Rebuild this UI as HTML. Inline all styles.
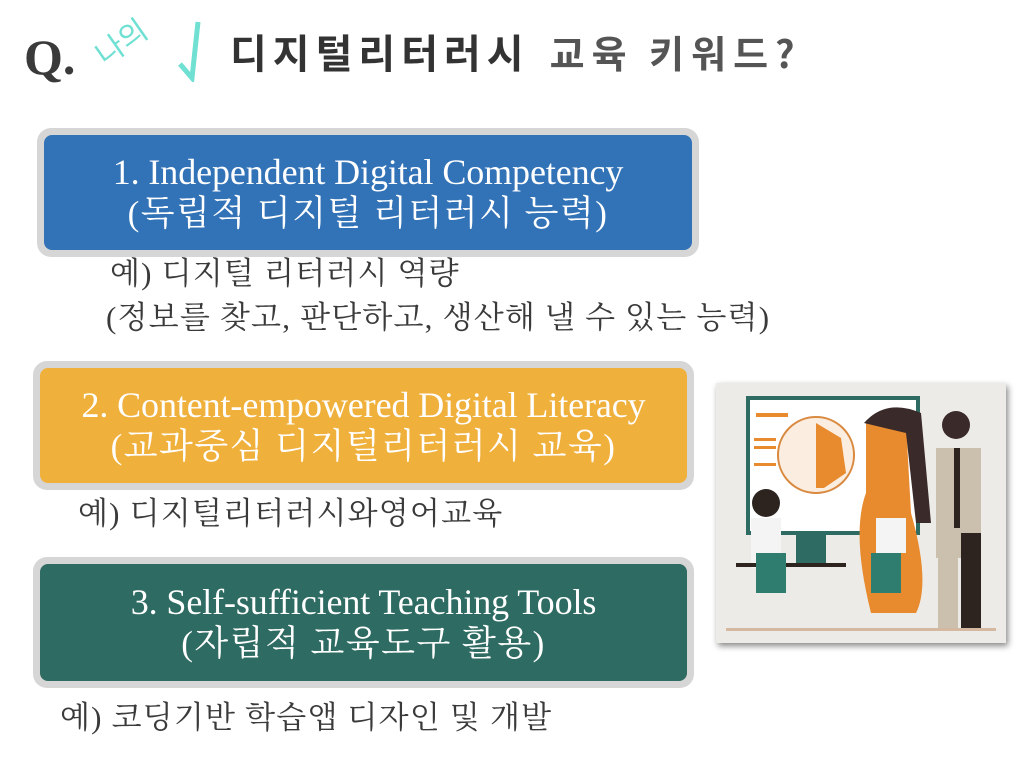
<!DOCTYPE html>
<html><head><meta charset="utf-8"><style>
body{margin:0;width:1024px;height:768px;background:#fff;position:relative;overflow:hidden;font-family:"Liberation Serif","Noto Serif CJK SC",serif}
.a{position:absolute}
.box{position:absolute;background:#d6d6d6;border-radius:14px}
.in{position:absolute;left:7px;right:7px;top:7px;bottom:7px;border-radius:8px;color:#fff;text-align:center;font-size:36px;line-height:41px;display:flex;flex-direction:column;justify-content:center;letter-spacing:-0.1px}
.in .k{font-size:35px;letter-spacing:1.5px}
.sub{position:absolute;font-size:31px;color:#3a3a3a;line-height:34px;letter-spacing:1.2px;white-space:nowrap}
</style></head><body>
<div class="a" style="left:24px;top:28px;font-size:50px;font-weight:bold;color:#3a3a3a">Q.</div>
<div class="a" style="left:110px;top:30px;font-size:30px;color:#6fe0d2;font-family:'Noto Sans CJK KR',sans-serif;transform:rotate(-35deg);transform-origin:left bottom">나의</div>
<svg class="a" style="left:172px;top:18px" width="40" height="64"><path d="M8 46 L20 60 L26 4" stroke="#6fe0d2" stroke-width="5" fill="none"/></svg>
<div class="a" style="left:230px;top:22px;font-size:40px;font-weight:bold;color:#333;font-family:'Noto Sans CJK KR',sans-serif;letter-spacing:6px;white-space:nowrap">디지털리터러시<span style="color:#555;font-size:38px;letter-spacing:7px;margin-left:20px">교육 키워드?</span></div>

<div class="box" style="left:37px;top:128px;width:662px;height:129px"><div class="in" style="background:#3272b7"><div>1. Independent Digital Competency</div><div class="k">(독립적 디지털 리터러시 능력)</div></div></div>
<div class="sub" style="left:110px;top:257px">예) 디지털 리터러시 역량</div>
<div class="sub" style="left:106px;top:301px">(정보를 찾고, 판단하고, 생산해 낼 수 있는 능력)</div>

<div class="box" style="left:33px;top:361px;width:661px;height:129px"><div class="in" style="background:#f0b03c"><div>2. Content-empowered Digital Literacy</div><div class="k">(교과중심 디지털리터러시 교육)</div></div></div>
<div class="sub" style="left:78px;top:497px">예) 디지털리터러시와영어교육</div>

<div class="box" style="left:33px;top:557px;width:661px;height:131px"><div class="in" style="background:#2e6b62"><div>3. Self-sufficient Teaching Tools</div><div class="k">(자립적 교육도구 활용)</div></div></div>
<div class="sub" style="left:60px;top:701px">예) 코딩기반 학습앱 디자인 및 개발</div>

<svg class="a" style="left:716px;top:383px;box-shadow:2px 3px 6px #888" width="290" height="260" viewBox="0 0 290 260">
<rect width="290" height="260" fill="#ecebe8"/>
<rect x="32" y="15" width="170" height="135" fill="#fff" stroke="#2e6b62" stroke-width="4"/>
<rect x="40" y="30" width="32" height="4" fill="#e88a2e"/>
<rect x="38" y="55" width="22" height="3" fill="#e88a2e"/><rect x="38" y="63" width="22" height="3" fill="#e88a2e"/><rect x="38" y="80" width="22" height="3" fill="#e88a2e"/>
<circle cx="100" cy="72" r="38" fill="#fbeee0" stroke="#d98a40" stroke-width="2"/>
<path d="M100 40 L125 55 L130 90 L108 105 L100 105Z" fill="#e88a2e"/>
<path d="M150 40 Q175 20 190 40 L195 130 Q215 200 200 230 L155 230 Q135 150 150 110Z" fill="#e88a2e"/>
<path d="M148 40 Q170 15 205 30 L215 140 L200 140 L190 50Z" fill="#3a2a2a"/>
<rect x="220" y="65" width="45" height="110" fill="#cbbfae"/>
<rect x="238" y="65" width="6" height="80" fill="#2d2420"/>
<circle cx="240" cy="42" r="14" fill="#3a2a2a"/>
<rect x="245" y="150" width="20" height="95" fill="#2d2420"/>
<rect x="222" y="150" width="20" height="95" fill="#cbbfae"/>
<circle cx="50" cy="120" r="14" fill="#2d2420"/>
<rect x="35" y="135" width="30" height="50" fill="#f4f4f4"/>
<rect x="20" y="180" width="110" height="4" fill="#2d2420"/>
<rect x="80" y="150" width="30" height="30" fill="#2e6b62"/>
<rect x="40" y="170" width="30" height="40" fill="#2e7d6f"/>
<rect x="155" y="170" width="30" height="40" fill="#2e7d6f"/>
<rect x="160" y="135" width="30" height="35" fill="#f4f4f4"/>
<rect x="10" y="245" width="270" height="3" fill="#d4b8a0"/>
</svg>
</body></html>
